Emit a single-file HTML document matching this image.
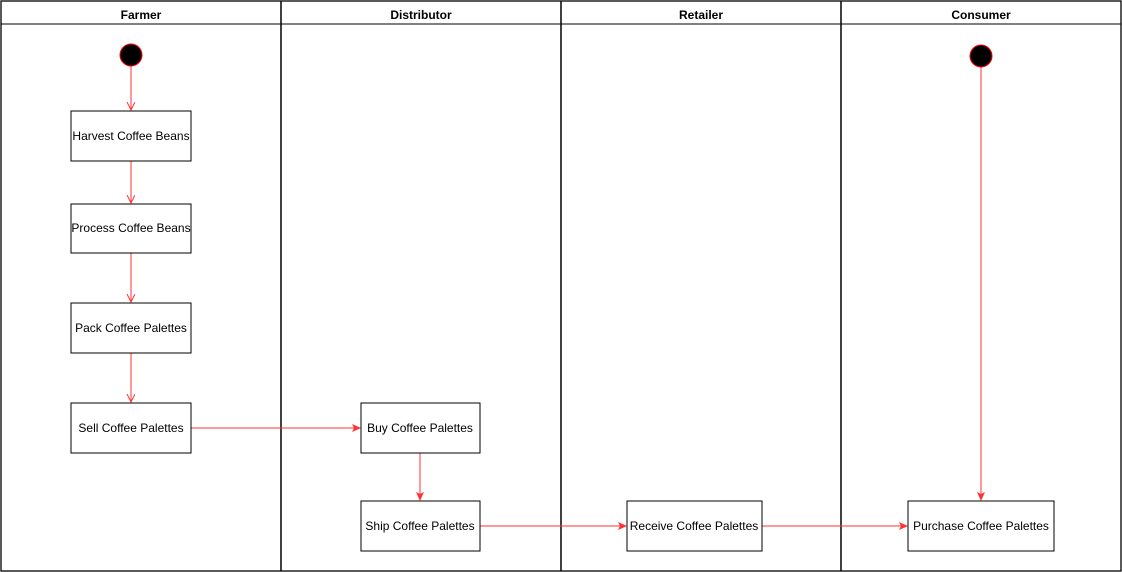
<!DOCTYPE html>
<html><head><style>body{margin:0;background:#fff}svg{display:block}</style></head><body>
<svg width="1122" height="572" viewBox="0 0 1122 572" xmlns="http://www.w3.org/2000/svg" font-family="Liberation Sans, sans-serif" font-size="12">
<defs>
<marker id="f" markerWidth="10" markerHeight="10" refX="8" refY="4" orient="auto" markerUnits="userSpaceOnUse"><path d="M0,0 L9,4 L0,8 L2,4 Z" fill="#ff3333"/></marker>
<marker id="o" markerWidth="10" markerHeight="10" refX="8" refY="4" orient="auto" markerUnits="userSpaceOnUse"><path d="M0,0 L8,4 L0,8" fill="none" stroke="#ff3333" stroke-width="1"/></marker>
</defs>
<g stroke="#000" fill="none">
<rect x="1" y="1" width="1120" height="570" stroke-width="1.3"/>
<line x1="1" y1="24" x2="1121" y2="24"/>
<line x1="281" y1="1" x2="281" y2="571" stroke-width="1.5"/>
<line x1="561" y1="1" x2="561" y2="571" stroke-width="1.5"/>
<line x1="841" y1="1" x2="841" y2="571" stroke-width="1.5"/>
</g>
<g font-weight="bold" text-anchor="middle">
<text x="141" y="19">Farmer</text><text x="421" y="19">Distributor</text><text x="701" y="19">Retailer</text><text x="981" y="19">Consumer</text>
</g>
<g stroke="#ff3333" fill="none">
<line x1="131" y1="66" x2="131" y2="110" marker-end="url(#o)"/>
<line x1="131" y1="161" x2="131" y2="203" marker-end="url(#o)"/>
<line x1="131" y1="253" x2="131" y2="302" marker-end="url(#o)"/>
<line x1="131" y1="353" x2="131" y2="402" marker-end="url(#o)"/>
<line x1="191" y1="428" x2="360" y2="428" marker-end="url(#f)"/>
<line x1="420" y1="453" x2="420" y2="500" marker-end="url(#f)"/>
<line x1="480" y1="526" x2="626" y2="526" marker-end="url(#f)"/>
<line x1="762" y1="526" x2="907" y2="526" marker-end="url(#f)"/>
<line x1="981" y1="67" x2="981" y2="500" marker-end="url(#f)"/>
</g>
<circle cx="131" cy="55" r="11" fill="#000" stroke="#ff0000"/>
<circle cx="981" cy="56" r="11" fill="#000" stroke="#ff0000"/>
<g fill="#fff" stroke="#000">
<rect x="71" y="111" width="120" height="50"/>
<rect x="71" y="204" width="120" height="49"/>
<rect x="71" y="303" width="120" height="50"/>
<rect x="71" y="403" width="120" height="50"/>
<rect x="361" y="403" width="119" height="50"/>
<rect x="361" y="501" width="119" height="50"/>
<rect x="627" y="501" width="135" height="50"/>
<rect x="908" y="501" width="146" height="50"/>
</g>
<g text-anchor="middle">
<text x="131" y="140">Harvest Coffee Beans</text>
<text x="131" y="232">Process Coffee Beans</text>
<text x="131" y="332">Pack Coffee Palettes</text>
<text x="131" y="432">Sell Coffee Palettes</text>
<text x="420" y="432">Buy Coffee Palettes</text>
<text x="420" y="530">Ship Coffee Palettes</text>
<text x="694" y="530">Receive Coffee Palettes</text>
<text x="981" y="530">Purchase Coffee Palettes</text>
</g>
</svg>
</body></html>
